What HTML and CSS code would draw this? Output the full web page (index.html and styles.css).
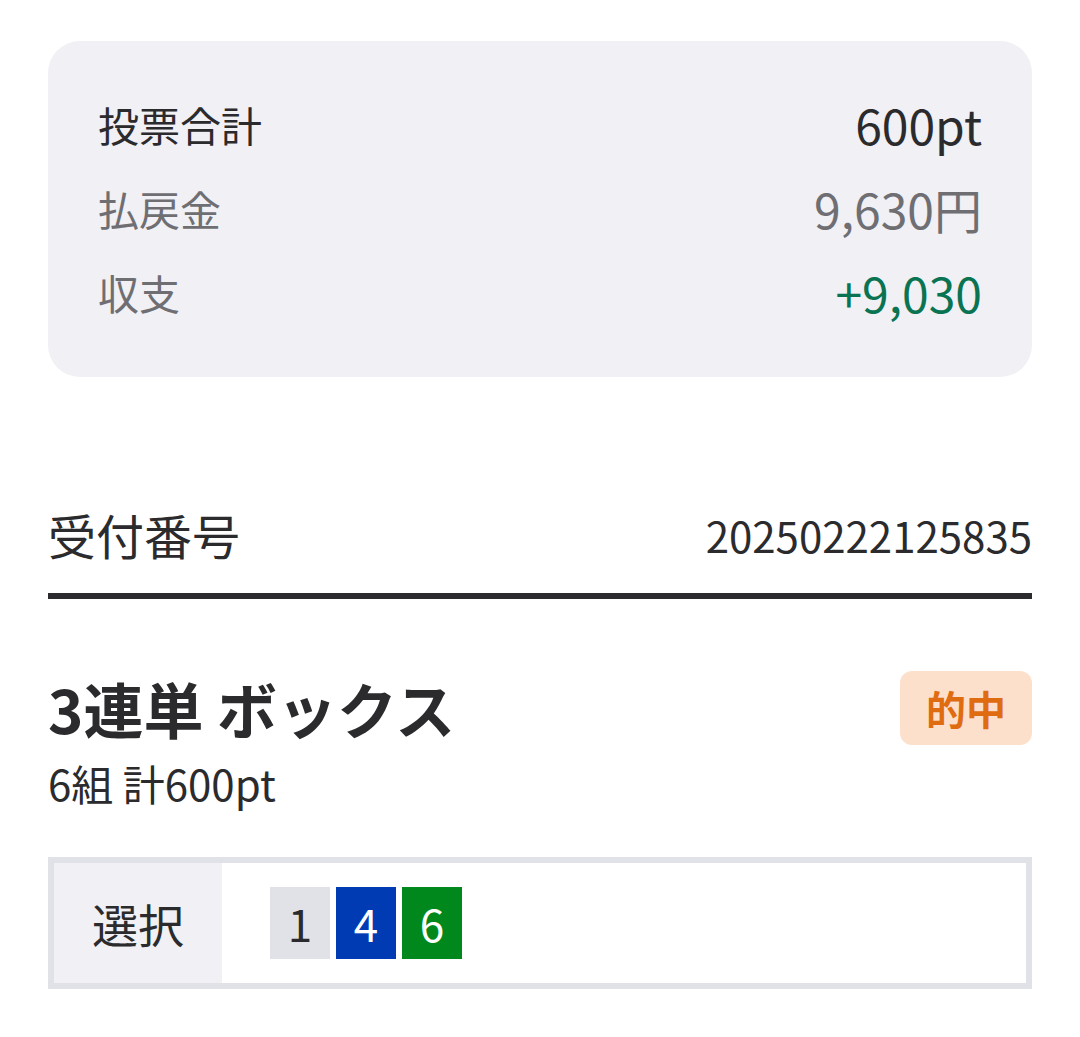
FILE: index.html
```html
<!DOCTYPE html>
<html lang="ja">
  <head>
    <meta charset="UTF-8" />
    <meta name="viewport" content="width=device-width, initial-scale=1.0" />
    <title>投票内容</title>
    <link rel="stylesheet" href="styles.css">
  </head>

  <body>
    <div class="page">
      <div class="summary">
        <div class="sum-row main">
          <span class="sum-label">投票合計</span>
          <span class="sum-value">600pt</span>
        </div>
        <div class="sum-row">
          <span class="sum-label">払戻金</span>
          <span class="sum-value">9,630円</span>
        </div>
        <div class="sum-row">
          <span class="sum-label">収支</span>
          <span class="sum-value plus">+9,030</span>
        </div>
      </div>

      <div class="receipt">
        <span class="receipt-label">受付番号</span>
        <span class="receipt-no">20250222125835</span>
      </div>

      <div class="bet">
        <div class="bet-head">
          <h2 class="bet-title">3連単 ボックス</h2>
          <span class="badge">的中</span>
        </div>
        <p class="bet-sub">6組 計600pt</p>

        <div class="pick">
          <div class="pick-label">選択</div>
          <div class="pick-nums">
            <span class="num n1">1</span>
            <span class="num n4">4</span>
            <span class="num n6">6</span>
          </div>
        </div>
      </div>
    </div>
  </body>
</html>
```

FILE: styles.css
```css
body,
html {
  margin: 0;
  background: #fff;
  font-family: "Noto Sans CJK JP", "Noto Sans", sans-serif;
  color: #2b2b2e;
}

.page {
  padding: 41px 48px 40px;
}

.summary {
  background-color: #f0f0f5;
  border-radius: 32px;
  padding: 41px 50px 43px;
}
.sum-row {
  display: flex;
  justify-content: space-between;
  align-items: center;
  height: 84px;
  color: #6e6e73;
}
.sum-row.main {
  color: #2b2b2e;
}
.sum-label {
  font-size: 41px;
}
.sum-value {
  font-size: 48px;
}
.plus {
  color: #0a7352;
}

.receipt {
  display: flex;
  justify-content: space-between;
  align-items: center;
  margin-top: 116px;
  height: 82px;
  border-bottom: 6px solid #2b2b2e;
  padding-bottom: 18px;
}
.receipt-label {
  font-size: 48px;
}
.receipt-no {
  font-size: 42px;
}

.bet {
  padding-top: 72px;
}
.bet-head {
  display: flex;
  justify-content: space-between;
  align-items: center;
}
.bet-title {
  margin: 0;
  font-size: 60px;
  font-weight: bold;
  line-height: 70px;
}
.badge {
  background-color: #fde0cb;
  color: #e06c12;
  font-size: 40px;
  font-weight: bold;
  border-radius: 12px;
  padding: 0 26px;
  height: 74px;
  line-height: 74px;
}
.bet-sub {
  margin: 10px 0 0;
  font-size: 42px;
  line-height: 56px;
}

.pick {
  display: flex;
  margin-top: 46px;
  border: 6px solid #e1e2e8;
}
.pick-label {
  width: 168px;
  background-color: #f0f0f5;
  font-size: 46px;
  display: flex;
  align-items: center;
  justify-content: center;
  height: 120px;
}
.pick-nums {
  display: flex;
  align-items: center;
  gap: 6px;
  padding-left: 48px;
}
.num {
  width: 60px;
  height: 72px;
  display: flex;
  align-items: center;
  justify-content: center;
  font-size: 44px;
}
.n1 {
  background-color: #e1e2e8;
  color: #2b2b2e;
}
.n4 {
  background-color: #003bb3;
  color: #fff;
}
.n6 {
  background-color: #00881c;
  color: #fff;
}
```
